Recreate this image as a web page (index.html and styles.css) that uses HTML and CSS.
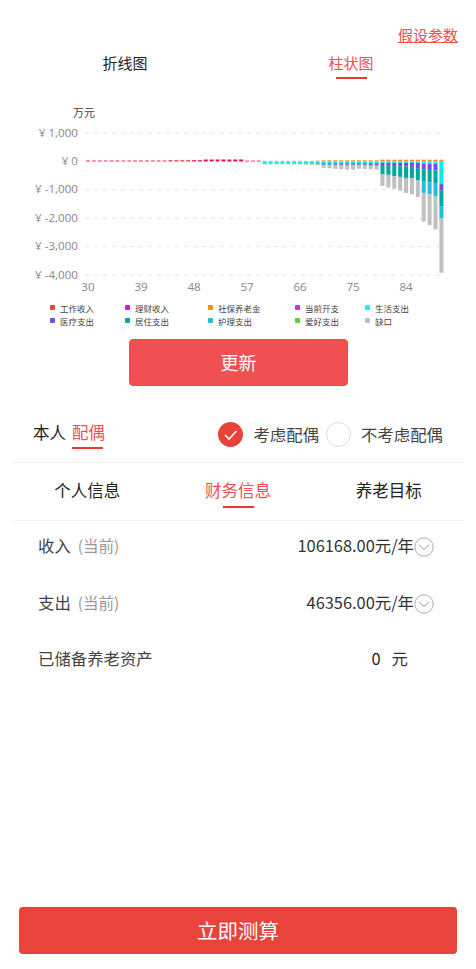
FILE: index.html
```html
<!DOCTYPE html>
<html lang="zh-CN">
  <head>
    <meta charset="UTF-8" />
    <meta name="viewport" content="width=device-width, initial-scale=1.0" />
    <title>养老测算</title>
    <link rel="stylesheet" href="styles.css">
  </head>
  <body>
    <div class="page">
      <div class="top-link"><a href="#">假设参数</a></div>

      <div class="chart-tabs">
        <div class="tab">折线图</div>
        <div class="tab active">柱状图</div>
      </div>

      <svg class="chart" id="chart" viewBox="0 0 476 200" width="476" height="200"></svg>

      <div class="legend">
        <div class="legend-item"><i style="background:#e8433b"></i>工作收入</div>
        <div class="legend-item"><i style="background:#ff00ee"></i>理财收入</div>
        <div class="legend-item"><i style="background:#ff8c1a"></i>社保养老金</div>
        <div class="legend-item"><i style="background:#d92cc8"></i>当前开支</div>
        <div class="legend-item"><i style="background:#00ffff"></i>生活支出</div>
        <div class="legend-item"><i style="background:#7b4be2"></i>医疗支出</div>
        <div class="legend-item"><i style="background:#00a79b"></i>居住支出</div>
        <div class="legend-item"><i style="background:#24bcdc"></i>护理支出</div>
        <div class="legend-item"><i style="background:#66cc33"></i>爱好支出</div>
        <div class="legend-item"><i style="background:#c0c0c0"></i>缺口</div>
      </div>

      <button class="btn btn-update">更新</button>

      <div class="person-row">
        <div class="person-tabs">
          <span class="person">本人</span>
          <span class="person active">配偶</span>
        </div>
        <div class="spouse-options">
          <span class="radio checked">
            <svg viewBox="0 0 25 25" width="25" height="25"><path d="M7 13l4 4 7.5-8" fill="none" stroke="#fff" stroke-width="1.6"/></svg>
          </span>
          <span class="radio-label">考虑配偶</span>
          <span class="radio"></span>
          <span class="radio-label">不考虑配偶</span>
        </div>
      </div>

      <div class="info-tabs">
        <div class="tab">个人信息</div>
        <div class="tab active">财务信息</div>
        <div class="tab">养老目标</div>
      </div>

      <div class="form">
        <div class="form-row">
          <div class="label">收入<small>(当前)</small></div>
          <div class="value">106168.00元/年<svg class="chevron" viewBox="0 0 20 20" width="20" height="20"><circle cx="10" cy="10" r="9.2" fill="none" stroke="#aaa"/><path d="M5 8l5 4.5L15 8" fill="none" stroke="#999"/></svg></div>
        </div>
        <div class="form-row">
          <div class="label">支出<small>(当前)</small></div>
          <div class="value">46356.00元/年<svg class="chevron" viewBox="0 0 20 20" width="20" height="20"><circle cx="10" cy="10" r="9.2" fill="none" stroke="#aaa"/><path d="M5 8l5 4.5L15 8" fill="none" stroke="#999"/></svg></div>
        </div>
        <div class="form-row">
          <div class="label">已储备养老资产</div>
          <div class="value value-plain"><b>0</b>元</div>
        </div>
      </div>

      <button class="btn btn-submit">立即测算</button>
    </div>
    <script src="chart.js"></script>
  </body>
</html>
```

FILE: styles.css
```css
* {
  margin: 0;
  padding: 0;
  box-sizing: border-box;
}

body {
  font-family: "Noto Sans CJK SC", "Open Sans", sans-serif;
  background: #fff;
  color: #333;
  overflow: hidden;
}

.page {
  width: 476px;
  height: 969px;
  display: flex;
  flex-direction: column;
}

.top-link {
  height: 24px;
  margin-top: 24px;
  padding-right: 18px;
  text-align: right;
  font-size: 15px;
  line-height: 22px;
}

.top-link a {
  color: #f25050;
}

/* Tabs */
.chart-tabs,
.info-tabs {
  display: flex;
  padding: 0 12px;
}

.tab {
  flex: 1;
  text-align: center;
  position: relative;
  color: #222;
}

.tab.active {
  color: #f25050;
}

.tab.active::after {
  content: "";
  position: absolute;
  left: 50%;
  bottom: 0;
  width: 31px;
  height: 2px;
  margin-left: -15.5px;
  background: #ea3b32;
}

.chart-tabs .tab {
  height: 31px;
  font-size: 15px;
  line-height: 30px;
}

/* Chart */
.chart {
  display: block;
  margin-top: 21px;
  flex: none;
  font-family: "Open Sans", "Noto Sans CJK SC", sans-serif;
}

.legend {
  display: grid;
  grid-template-columns: 75px 83px 87px 70px 70px;
  grid-auto-rows: 13px;
  padding-left: 50px;
  margin-top: 1px;
}

.legend-item {
  display: flex;
  align-items: center;
  gap: 5px;
  font-size: 8.5px;
  color: #444;
}

.legend-item i {
  width: 5px;
  height: 5px;
  border-radius: 1px;
}

/* Buttons */
.btn {
  border: none;
  border-radius: 4px;
  color: #fff;
  font-family: inherit;
  flex: none;
}

.btn-update {
  width: 219px;
  height: 47px;
  margin: 12px 0 0 129px;
  padding-bottom: 2px;
  background: #f05052;
  border: 1px solid #ec4a44;
  font-size: 18px;
}

.btn-submit {
  width: 438px;
  height: 47px;
  margin: auto 0 15px 19px;
  padding-bottom: 2px;
  background: #e8443b;
  font-size: 20.5px;
}

/* Person row */
.person-row {
  display: flex;
  justify-content: space-between;
  align-items: flex-start;
  height: 77px;
  padding: 34px 33px 0 33px;
  position: relative;
}

.person-row::after,
.info-tabs::after {
  content: "";
  position: absolute;
  left: 12px;
  right: 11px;
  bottom: 0;
  height: 1px;
  background: #f3f3f3;
}

.person-tabs {
  display: flex;
  gap: 6px;
  font-size: 16.5px;
  line-height: 24px;
  color: #222;
}

.person.active {
  color: #f25050;
  position: relative;
  display: block;
  height: 29px;
}

.person.active::after {
  content: "";
  position: absolute;
  left: 0;
  bottom: 0;
  width: 31px;
  height: 2px;
  background: #ea3b32;
}

.spouse-options {
  display: flex;
  align-items: center;
  height: 25px;
  margin-top: 1.5px;
  font-size: 16.4px;
  color: #444;
}

.radio {
  width: 25px;
  height: 25px;
  border: 1px solid #ddd;
  border-radius: 50%;
  background: #fff;
}

.radio.checked {
  background: #ea413a;
  border: none;
}

.radio svg {
  display: block;
}

.radio-label {
  margin-left: 10px;
  margin-right: 7px;
  white-space: nowrap;
}

.radio-label:last-child {
  margin-right: 0;
}

.info-tabs {
  position: relative;
  height: 58px;
}

.info-tabs .tab {
  height: 45px;
  font-size: 16.5px;
  line-height: 54px;
}

/* Form rows */
.form {
  margin-top: -4px;
  padding: 0 42px 0 38px;
}

.form-row {
  display: flex;
  justify-content: space-between;
  align-items: center;
  height: 56.5px;
  font-size: 16.4px;
  color: #444;
}

.label small {
  margin-left: 7px;
  font-size: 15.5px;
  color: #999;
}

.value {
  display: flex;
  align-items: center;
  color: #333;
}

.chevron {
  margin-top: 4px;
  flex: none;
}

.value-plain {
  padding-right: 26px;
}

.value-plain b {
  font-weight: 400;
  margin-right: 11px;
  color: #222;
}
```

FILE: chart.js
```js
// chart area, in px from the top of the svg
var svg = document.getElementById("chart");
var zeroY = 61.5;
var yStep = 28.4;
var NS = "http://www.w3.org/2000/svg";

function add(tag, attrs, text) {
  var el = document.createElementNS(NS, tag);
  for (var k in attrs) el.setAttribute(k, attrs[k]);
  if (text) el.textContent = text;
  svg.appendChild(el);
  return el;
}

function ageX(age) {
  return 88 + (age - 30) * 5.89;
}

add("text", { x: 73, y: 17, "font-size": 11, fill: "#444", "font-family": "Noto Sans CJK SC" }, "万元");

var yLabels = ["¥ 1,000", "¥ 0", "¥ -1,000", "¥ -2,000", "¥ -3,000", "¥ -4,000"];
yLabels.forEach(function (label, i) {
  var y = zeroY + (i - 1) * yStep;
  add("text", { x: 78, y: y + 3.5, "font-size": 11.6, fill: "#888", "text-anchor": "end" }, label);
  if (i !== 1) {
    add("line", { x1: 85, x2: 441, y1: y, y2: y, stroke: "#e6e6e6", "stroke-dasharray": "4 5" });
  }
});

for (var age = 30; age <= 84; age += 9) {
  add("text", { x: ageX(age), y: 191, "font-size": 11.6, fill: "#888", "text-anchor": "middle" }, String(age));
}

// income years: thin red bars sitting on the zero line
for (var a = 30; a < 60; a++) {
  var h = a < 44 ? 1 : a < 50 ? 1.3 : a < 57 ? 2 : 0.9;
  add("rect", { x: ageX(a) - 2, y: zeroY - h, width: 4, height: h, fill: a >= 48 && a < 57 ? "#ea1048" : "#f0304a" });
}

var colors = ["#ff8c1a", "#00eef2", "#7b4be2", "#00a79b", "#24bcdc", "#c0c0c0"];

// age 60 to 90: [pension, living, medical, housing, nursing, gap] in px
var bars = [
  [0.6, 1.6, 0, 0.5, 0, 0.8], [0.6, 1.6, 0, 0.5, 0, 0.8], [0.6, 1.6, 0, 0.5, 0, 0.8],
  [0.6, 1.6, 0, 0.5, 0, 0.8], [0.6, 1.6, 0, 0.5, 0, 0.9], [0.6, 1.6, 0, 0.5, 0, 0.9],
  [0.6, 1.6, 0, 0.5, 0, 1], [0.6, 1.6, 0, 0.6, 0, 1], [0.6, 1.6, 0, 0.6, 0, 1.1],
  [0.8, 1.6, 0.4, 0.6, 0, 1.2], [1.2, 1.8, 1, 0.8, 0, 2.8], [1.2, 1.8, 1, 0.8, 0, 3.2],
  [1.2, 1.8, 1.4, 0.8, 0, 3.4], [1.2, 1.8, 1.4, 0.8, 0, 3.8], [1.2, 1.8, 1.4, 0.8, 0, 4.2],
  [1.2, 1.8, 1.4, 0.8, 0, 4.2], [1.2, 1.8, 1.4, 0.8, 0, 3.2], [1.2, 1.8, 1.4, 0.8, 0, 3.4],
  [1.2, 1.8, 1.6, 0.8, 0, 3.6], [1.2, 1.8, 1.6, 0.8, 0, 4],
  [1.8, 1.4, 3, 8.4, 0, 11.7], [1.8, 1.4, 3, 9, 0, 12.6], [1.8, 1.4, 3.2, 10, 0, 12.6],
  [1.8, 1.4, 3.4, 10.6, 0, 13.6], [1.8, 1.4, 3.6, 11.4, 0, 15], [1.8, 1.4, 4, 11.4, 0, 16],
  [1.8, 1.4, 5.2, 12.4, 0, 16.6], [1.8, 2.4, 5.7, 12, 11.3, 28.7], [1.8, 2.4, 6, 12.6, 11.7, 31],
  [1.8, 2.4, 6.4, 13.4, 12.3, 33.4], [1.8, 22.6, 6.6, 15.4, 12.3, 54.4]
];

bars.forEach(function (stack, i) {
  var x = ageX(60 + i) - 2;
  add("rect", { x: x, y: zeroY - stack[0], width: 4, height: stack[0], fill: colors[0] });
  var y = zeroY;
  for (var s = 1; s < stack.length; s++) {
    if (stack[s] > 0) {
      add("rect", { x: x, y: y, width: 4, height: stack[s], fill: colors[s] });
      y += stack[s];
    }
  }
});
```
